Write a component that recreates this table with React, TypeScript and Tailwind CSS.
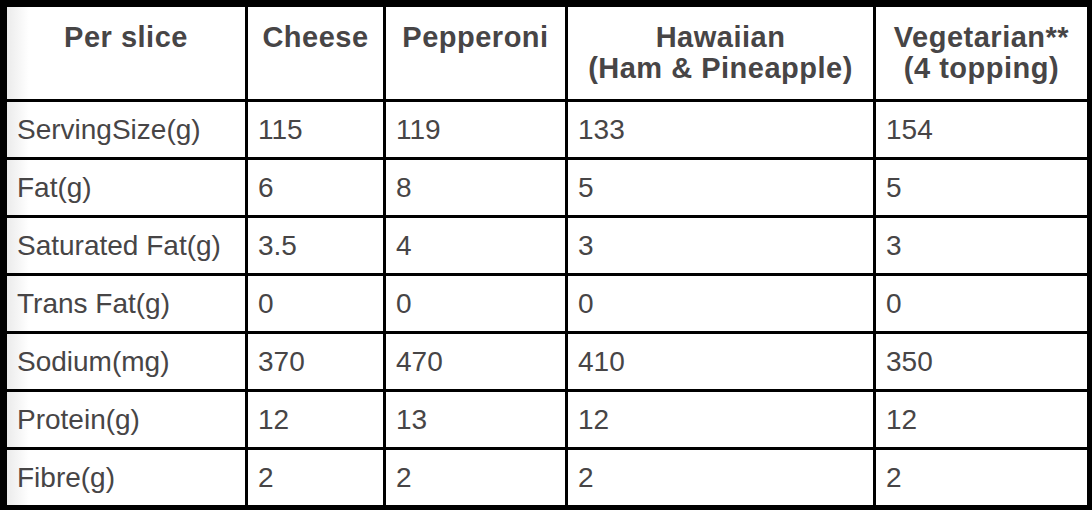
import React from "react";

const headers: string[][] = [
  ["Per slice"],
  ["Cheese"],
  ["Pepperoni"],
  ["Hawaiian", "(Ham & Pineapple)"],
  ["Vegetarian**", "(4 topping)"],
];

const rows: string[][] = [
  ["ServingSize(g)", "115", "119", "133", "154"],
  ["Fat(g)", "6", "8", "5", "5"],
  ["Saturated Fat(g)", "3.5", "4", "3", "3"],
  ["Trans Fat(g)", "0", "0", "0", "0"],
  ["Sodium(mg)", "370", "470", "410", "350"],
  ["Protein(g)", "12", "13", "12", "12"],
  ["Fibre(g)", "2", "2", "2", "2"],
];

export default function App() {
  return (
    <div className="w-[1092px] h-[510px] bg-black pt-[7px] pl-[7px] overflow-hidden">
      <div
        className="grid w-[1080px] h-[498px] bg-black gap-[3px] grid-cols-[238px_135px_179px_305px_211px] grid-rows-[92px_repeat(7,55px)] text-[#474546]"
        style={{ fontFamily: '"Liberation Sans", Arial, Helvetica, sans-serif' }}
      >
        {headers.map((h, i) => (
          <div
            key={"h" + i}
            className={
              "pt-[15px] text-center font-bold text-[29px] leading-[31px] tracking-[0.5px] " +
              (i === 0
                ? "bg-[linear-gradient(to_right,#ebebeb,#ffffff_22px)]"
                : "bg-white")
            }
          >
            {h.map((line, j) => (
              <div key={j}>{line}</div>
            ))}
          </div>
        ))}
        {rows.map((r, ri) =>
          r.map((c, ci) => (
            <div
              key={ri + "-" + ci}
              className={
                "flex items-center pl-[10px] text-[28px] leading-[32px] " +
                (ci === 0
                  ? "bg-[linear-gradient(to_right,#ebebeb,#ffffff_22px)]"
                  : "bg-white")
              }
            >
              {c}
            </div>
          ))
        )}
      </div>
    </div>
  );
}
